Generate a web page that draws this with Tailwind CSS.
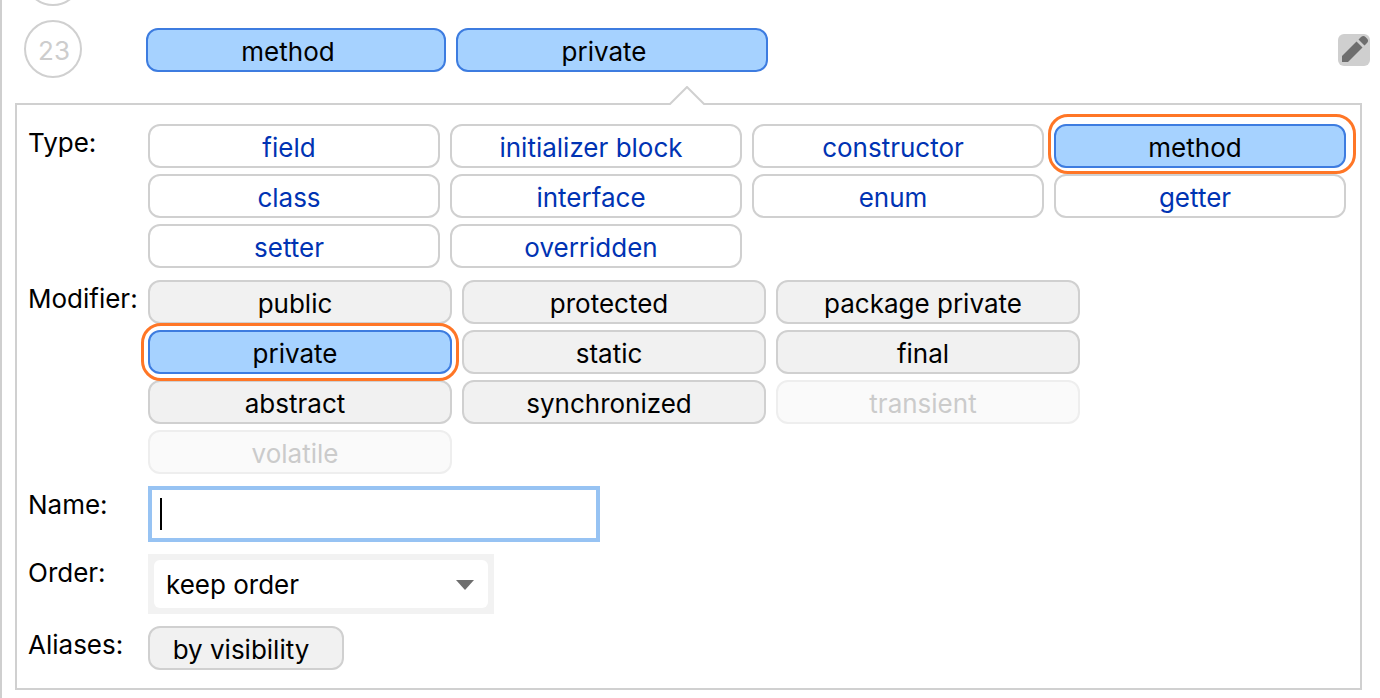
<!DOCTYPE html>
<html lang="en">
<head>
<meta charset="utf-8">
<meta name="viewport" content="width=device-width, initial-scale=1">
<title>Arrangement rule</title>
<script src="https://cdn.jsdelivr.net/npm/@tailwindcss/browser@4"></script>
</head>
<body class="bg-white">
<main class="min-h-screen border-l-2 border-[#cfcfcf] pl-[13px] font-['Inter','Liberation_Sans',sans-serif] text-[26px] leading-10 text-black">
  <!-- Tail of the previous rule -->
  <div class="flex h-1.5 flex-col justify-end overflow-hidden pl-[9px]">
    <div class="size-[58px] shrink-0 rounded-full border-2 border-[#d0d0d0]"></div>
  </div>

  <div class="mt-3.5 flex items-center pr-2.5 pl-[9px]">
    <div class="flex size-[58px] shrink-0 items-center justify-center rounded-full border-2 border-[#d0d0d0] pt-1 pl-0.5 text-[#cdcdcd]">23</div>
    <div class="ml-16 flex gap-2.5 pt-0.5">
      <button type="button" class="h-11 w-[300px] rounded-xl border-2 border-[#3d7ce0] bg-[#a6d2ff] pt-0.5 pr-4">method</button>
      <button type="button" class="h-11 w-[312px] rounded-xl border-2 border-[#3d7ce0] bg-[#a6d2ff] pt-0.5 pr-4">private</button>
    </div>
    <div class="ml-auto shrink-0 pt-0.5">
      <button type="button" aria-label="Edit rule" class="block size-8 rounded-md bg-[#cfcfcf]">
        <svg viewBox="0 0 32 32" class="size-8" fill="#6e6e6e" aria-hidden="true">
          <path d="M4 22 18.500 7.500 24.500 13.500 10 28H4Z"/>
          <path d="M20.500 5.500 23 3Q25.500 1 27.500 3L29.200 4.700Q31 6.700 29 9L26.500 11.500Z"/>
        </svg>
      </button>
    </div>
  </div>

  <section aria-label="Rule settings" class="relative mt-[25px] mr-[18px] border-2 border-[#d0d0d0] pt-[19px] pr-3.5 pb-[18px] pl-[11px]">
    <svg viewBox="0 0 36 20" class="absolute -top-[19px] left-[652px] h-5 w-9" aria-hidden="true">
      <path d="M1 18 18 1 35 18V20H1Z" fill="#fff"/>
      <path d="M0 18H1L18 1 35 18H36" fill="none" stroke="#d0d0d0" stroke-width="2"/>
    </svg>
    <div class="grid grid-cols-[120px_minmax(0,1fr)] gap-y-3">
      <div id="type" class="leading-[38px]">Type:</div>
      <div role="group" aria-labelledby="type" class="grid grid-cols-4 gap-x-2.5 gap-y-1.5 text-[#0033b3]">
        <button type="button" class="h-11 rounded-xl border-2 border-[#d0d0d0] pt-0.5 pr-2.5">field</button>
        <button type="button" class="h-11 rounded-xl border-2 border-[#d0d0d0] pt-0.5 pr-2.5">initializer block</button>
        <button type="button" class="h-11 rounded-xl border-2 border-[#d0d0d0] pt-0.5 pr-2.5">constructor</button>
        <button type="button" aria-pressed="true" class="relative h-11 rounded-xl border-2 border-[#3d7ce0] bg-[#a6d2ff] pt-0.5 pr-2.5 text-black">method<span class="absolute -top-3 -right-3 -bottom-2 -left-2 rounded-[20px] border-3 border-[#ff7626]"></span></button>
        <button type="button" class="h-11 rounded-xl border-2 border-[#d0d0d0] pt-0.5 pr-2.5">class</button>
        <button type="button" class="h-11 rounded-xl border-2 border-[#d0d0d0] pt-0.5 pr-2.5">interface</button>
        <button type="button" class="h-11 rounded-xl border-2 border-[#d0d0d0] pt-0.5 pr-2.5">enum</button>
        <button type="button" class="h-11 rounded-xl border-2 border-[#d0d0d0] pt-0.5 pr-2.5">getter</button>
        <button type="button" class="h-11 rounded-xl border-2 border-[#d0d0d0] pt-0.5 pr-2.5">setter</button>
        <button type="button" class="h-11 rounded-xl border-2 border-[#d0d0d0] pt-0.5 pr-2.5">overridden</button>
      </div>

      <div id="modifier" class="leading-[38px]">Modifier:</div>
      <div role="group" aria-labelledby="modifier" class="grid max-w-[932px] grid-cols-3 gap-x-2.5 gap-y-1.5">
        <button type="button" class="h-11 rounded-xl border-2 border-[#d0d0d0] bg-[#f1f1f1] pt-0.5 pr-2.5">public</button>
        <button type="button" class="h-11 rounded-xl border-2 border-[#d0d0d0] bg-[#f1f1f1] pt-0.5 pr-2.5">protected</button>
        <button type="button" class="h-11 rounded-xl border-2 border-[#d0d0d0] bg-[#f1f1f1] pt-0.5 pr-2.5">package private</button>
        <button type="button" aria-pressed="true" class="relative h-11 rounded-xl border-2 border-[#3d7ce0] bg-[#a6d2ff] pt-0.5 pr-2.5">private<span class="absolute -inset-[9px] rounded-[20px] border-3 border-[#ff7626]"></span></button>
        <button type="button" class="h-11 rounded-xl border-2 border-[#d0d0d0] bg-[#f1f1f1] pt-0.5 pr-2.5">static</button>
        <button type="button" class="h-11 rounded-xl border-2 border-[#d0d0d0] bg-[#f1f1f1] pt-0.5 pr-2.5">final</button>
        <button type="button" class="h-11 rounded-xl border-2 border-[#d0d0d0] bg-[#f1f1f1] pt-0.5 pr-2.5">abstract</button>
        <button type="button" class="h-11 rounded-xl border-2 border-[#d0d0d0] bg-[#f1f1f1] pt-0.5 pr-2.5">synchronized</button>
        <button type="button" disabled class="h-11 rounded-xl border-2 border-[#eeeeee] bg-[#fafafa] pt-0.5 pr-2.5 text-[#cbcbcb]">transient</button>
        <button type="button" disabled class="h-11 rounded-xl border-2 border-[#eeeeee] bg-[#fafafa] pt-0.5 pr-2.5 text-[#cbcbcb]">volatile</button>
      </div>

      <label for="name" class="leading-[38px]">Name:</label>
      <div class="relative max-w-[452px]">
        <input id="name" type="text" class="block h-14 w-full border-4 border-[#97c3f3] px-2 outline-none">
        <span class="absolute top-3 left-3 h-8 w-0.5 bg-black"></span>
      </div>

      <label for="order" class="leading-[38px]">Order:</label>
      <div class="relative max-w-[346px] bg-[#f2f2f2] p-1.5">
        <select id="order" class="block h-12 w-full appearance-none rounded-md bg-white px-3 pt-0.5 outline-none">
          <option>keep order</option>
        </select>
        <svg viewBox="0 0 18 10" class="pointer-events-none absolute top-[26px] right-5 h-2.5 w-[18px]" fill="#6e6e6e" aria-hidden="true"><path d="M0 0H18L9 10Z"/></svg>
      </div>

      <div id="aliases" class="leading-[38px]">Aliases:</div>
      <div role="group" aria-labelledby="aliases">
        <button type="button" class="block h-11 w-[196px] rounded-xl border-2 border-[#d0d0d0] bg-[#f1f1f1] pt-0.5 pr-2.5">by visibility</button>
      </div>
    </div>
  </section>
</main>
</body>
</html>
